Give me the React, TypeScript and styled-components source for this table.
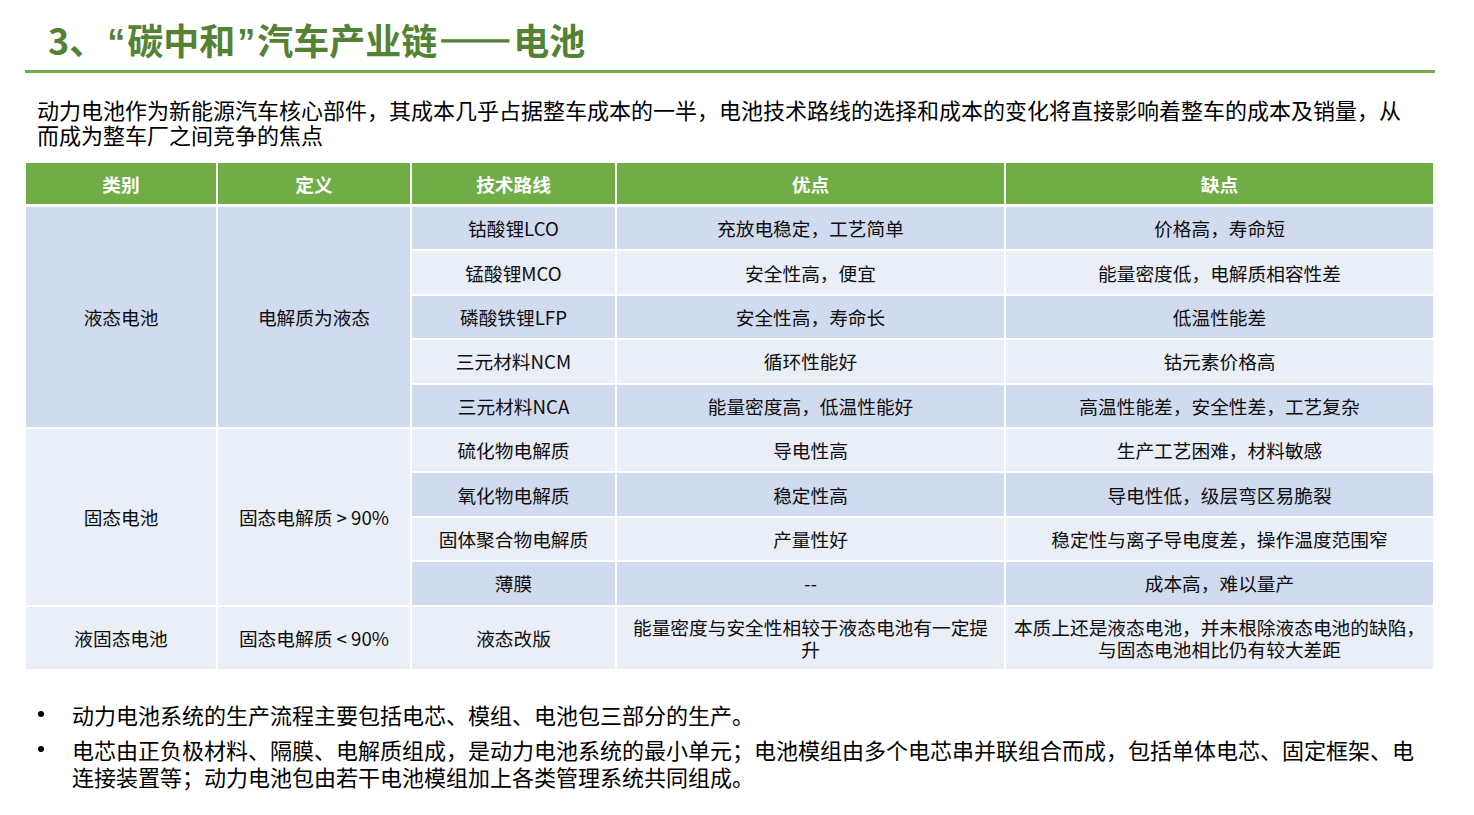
import React from "react";
import styled, { createGlobalStyle } from "styled-components";

const Global = createGlobalStyle`
  html, body { margin: 0; padding: 0; background: #ffffff; }
  body { font-family: "Noto Sans CJK SC", "Noto Sans", sans-serif; color: #000; }
`;

const Page = styled.div`
  width: 1474px;
  height: 815px;
  display: flex;
  flex-direction: column;
  box-sizing: border-box;
  padding-top: 19px;
`;

const Title = styled.h1`
  margin: 0 0 0 48px;
  height: 41px;
  line-height: 41px;
  font-size: 36px;
  font-weight: 700;
  color: #548235;
  letter-spacing: 0;
`;

const Quote = styled.span`
  font-family: "Liberation Sans", "Noto Sans", sans-serif;
  font-weight: 700;
  margin: 0 2px;
`;

const Dash = styled.span`
  display: inline-block;
  font-feature-settings: "fwid" 1;
  letter-spacing: -2px;
  -webkit-text-stroke: 1.6px #548235;
  margin: 0 4px 0 2px;
`;

const Rule = styled.div`
  margin: 10px 0 0 25px;
  width: 1410px;
  height: 3px;
  background: #70ad47;
`;

const Intro = styled.p`
  margin: 24px 0 0 37px;
  font-size: 22px;
  line-height: 25px;
  color: #000;
`;

const Table = styled.div`
  margin: 16px 0 0 26px;
  width: 1407px;
  display: grid;
  grid-template-columns: 190px 192px 203px 387px 427px;
  grid-template-rows: 42px repeat(9, 42.4px) 62px;
  column-gap: 2px;
  row-gap: 2px;
  background: #ffffff;
`;

const HeadCell = styled.div`
  background: #70ad47;
  color: #ffffff;
  font-weight: 700;
  font-size: 18.7px;
  display: flex;
  align-items: center;
  justify-content: center;
  margin-bottom: 1px;
`;

const Cell = styled.div<{ $tone: "dark" | "light"; $span?: number }>`
  background: ${(p) => (p.$tone === "dark" ? "#d1dbef" : "#e9eef7")};
  grid-row: ${(p) => (p.$span ? `span ${p.$span}` : "auto")};
  display: flex;
  align-items: center;
  justify-content: center;
  text-align: center;
  font-size: 18.7px;
  line-height: 22px;
  color: #0d0d0d;
  padding: 0 4px;
`;

const Bullets = styled.ul`
  margin: 32px 0 0 0;
  padding: 0;
  list-style: none;
  display: flex;
  flex-direction: column;
  gap: 8px;
`;

const Bullet = styled.li`
  display: flex;
  font-size: 22px;
  line-height: 27px;
  color: #000;
`;

const Dot = styled.span`
  width: 72px;
  height: 27px;
  flex: none;
  display: flex;
  align-items: center;
  padding-left: 38px;
  box-sizing: border-box;
  &::before {
    content: "";
    width: 6px;
    height: 6px;
    border-radius: 50%;
    background: #000;
  }
`;

type Row = { tech: string; pro: React.ReactNode; con: React.ReactNode };

const liquid: Row[] = [
  { tech: "钴酸锂LCO", pro: "充放电稳定，工艺简单", con: "价格高，寿命短" },
  { tech: "锰酸锂MCO", pro: "安全性高，便宜", con: "能量密度低，电解质相容性差" },
  { tech: "磷酸铁锂LFP", pro: "安全性高，寿命长", con: "低温性能差" },
  { tech: "三元材料NCM", pro: "循环性能好", con: "钴元素价格高" },
  { tech: "三元材料NCA", pro: "能量密度高，低温性能好", con: "高温性能差，安全性差，工艺复杂" },
];

const solid: Row[] = [
  { tech: "硫化物电解质", pro: "导电性高", con: "生产工艺困难，材料敏感" },
  { tech: "氧化物电解质", pro: "稳定性高", con: "导电性低，级层弯区易脆裂" },
  { tech: "固体聚合物电解质", pro: "产量性好", con: "稳定性与离子导电度差，操作温度范围窄" },
  { tech: "薄膜", pro: "--", con: "成本高，难以量产" },
];

const toneOf = (i: number): "dark" | "light" => (i % 2 === 0 ? "dark" : "light");

export default function App() {
  return (
    <>
      <Global />
      <Page>
        <Title>
          3、<Quote>“</Quote>碳中和<Quote>”</Quote>汽车产业链<Dash>——</Dash>电池
        </Title>
        <Rule />
        <Intro>
          动力电池作为新能源汽车核心部件，其成本几乎占据整车成本的一半，电池技术路线的选择和成本的变化将直接影响着整车的成本及销量，从
          <br />
          而成为整车厂之间竞争的焦点
        </Intro>
        <Table>
          <HeadCell>类别</HeadCell>
          <HeadCell>定义</HeadCell>
          <HeadCell>技术路线</HeadCell>
          <HeadCell>优点</HeadCell>
          <HeadCell>缺点</HeadCell>

          <Cell $tone="dark" $span={5}>液态电池</Cell>
          <Cell $tone="dark" $span={5}>电解质为液态</Cell>
          {liquid.map((r, i) => (
            <React.Fragment key={r.tech}>
              <Cell $tone={toneOf(i)}>{r.tech}</Cell>
              <Cell $tone={toneOf(i)}>{r.pro}</Cell>
              <Cell $tone={toneOf(i)}>{r.con}</Cell>
            </React.Fragment>
          ))}

          <Cell $tone="light" $span={4}>固态电池</Cell>
          <Cell $tone="light" $span={4}>固态电解质 &gt; 90%</Cell>
          {solid.map((r, i) => (
            <React.Fragment key={r.tech}>
              <Cell $tone={toneOf(i + 1)}>{r.tech}</Cell>
              <Cell $tone={toneOf(i + 1)}>{r.pro}</Cell>
              <Cell $tone={toneOf(i + 1)}>{r.con}</Cell>
            </React.Fragment>
          ))}

          <Cell $tone="light">液固态电池</Cell>
          <Cell $tone="light">固态电解质 &lt; 90%</Cell>
          <Cell $tone="light">液态改版</Cell>
          <Cell $tone="light">
            能量密度与安全性相较于液态电池有一定提
            <br />
            升
          </Cell>
          <Cell $tone="light">
            本质上还是液态电池，并未根除液态电池的缺陷，
            <br />
            与固态电池相比仍有较大差距
          </Cell>
        </Table>
        <Bullets>
          <Bullet>
            <Dot />
            <span>动力电池系统的生产流程主要包括电芯、模组、电池包三部分的生产。</span>
          </Bullet>
          <Bullet>
            <Dot />
            <span>
              电芯由正负极材料、隔膜、电解质组成，是动力电池系统的最小单元；电池模组由多个电芯串并联组合而成，包括单体电芯、固定框架、电
              <br />
              连接装置等；动力电池包由若干电池模组加上各类管理系统共同组成。
            </span>
          </Bullet>
        </Bullets>
      </Page>
    </>
  );
}
